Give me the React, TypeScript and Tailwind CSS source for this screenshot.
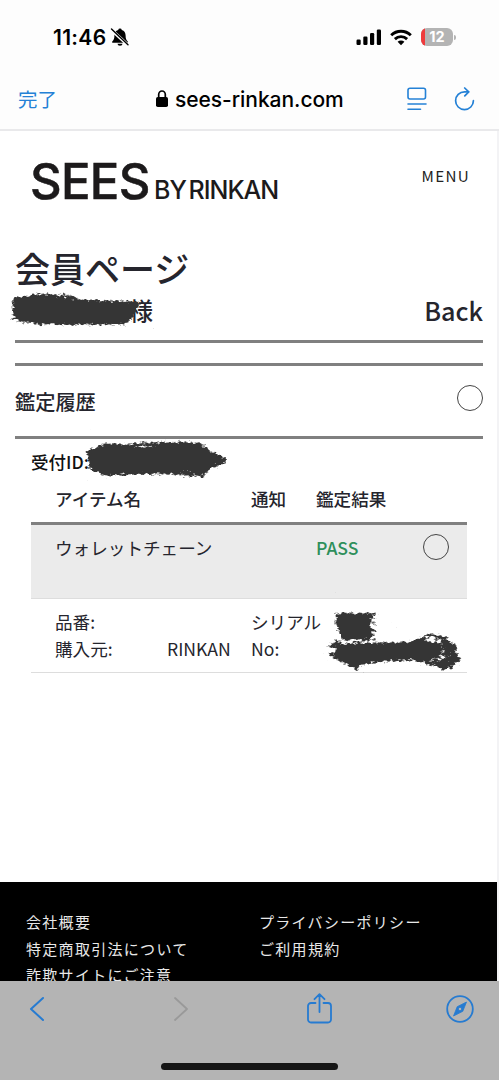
import { ReactNode } from 'react';

const footerLinks = [
  ['会社概要', 'プライバシーポリシー'],
  ['特定商取引法について', 'ご利用規約'],
  ['詐欺サイトにご注意', ''],
];

// charcoal marker: the blurred stroke is thresholded against noise, so only the rim turns grainy
const Scribble = ({ className, seed, children, viewBox }: { className: string; seed: number; viewBox: string; children: ReactNode }) => (
  <svg className={`absolute overflow-visible pointer-events-none ${className}`} viewBox={viewBox} fill="none" stroke="#363636" strokeLinecap="round" strokeLinejoin="round">
    <defs>
      <filter id={`rough-${seed}`} x="-20%" y="-40%" width="140%" height="180%">
        <feGaussianBlur in="SourceAlpha" stdDeviation="2.2" result="soft" />
        <feTurbulence type="fractalNoise" baseFrequency="0.25 0.42" numOctaves="3" seed={seed} result="noise" />
        <feComposite in="soft" in2="noise" operator="arithmetic" k1="0" k2="4.2" k3="4" k4="-3.5" result="grain" />
        <feFlood floodColor="#363636" />
        <feComposite in2="grain" operator="in" />
      </filter>
    </defs>
    <g filter={`url(#rough-${seed})`}>{children}</g>
  </svg>
);

const StatusBar = () => (
  <div className="flex h-[74px] shrink-0 items-center pl-[53px] pr-[43px] text-black">
    <span className="text-[21px] font-semibold leading-none tracking-[0.3px]">11:46</span>
    <svg className="ml-[4px] h-[20px] w-[20px]" viewBox="0 0 20 20">
      <path d="M10 1.5a1.8 1.8 0 0 1 1.8 1.4c2.6.8 3.8 2.9 3.8 5.5 0 3.6.8 4.6 2.2 6v1.3H2.2v-1.3c1.4-1.4 2.2-2.4 2.2-6 0-2.6 1.2-4.7 3.8-5.5A1.8 1.8 0 0 1 10 1.5Z" fill="#000" />
      <path d="M7.5 16.7h5a2.5 2.1 0 0 1-5 0Z" fill="#000" />
      <path d="M1 2.4 18 18.2" stroke="#fdfdfd" strokeWidth="3.2" />
      <path d="M1.5 2 18 17.7" stroke="#000" strokeWidth="1.4" strokeLinecap="round" />
    </svg>
    <svg className="ml-auto h-[17px] w-[26px]" viewBox="0 0 26 17">
      <rect x="0.5" y="10.5" width="4.2" height="5.5" rx="1.2" />
      <rect x="7.3" y="7.5" width="4.2" height="8.5" rx="1.2" />
      <rect x="14" y="4" width="4.2" height="12" rx="1.2" />
      <rect x="20.8" y="0.5" width="4.2" height="15.5" rx="1.2" />
    </svg>
    <svg className="ml-[8px] h-[17px] w-[22px]" viewBox="0 0 22 17" fill="none" stroke="#000" strokeWidth="2.9">
      <path d="M1.2 6.3a14 14 0 0 1 19.6 0" />
      <path d="M4.9 10.1a8.8 8.8 0 0 1 12.2 0" />
      <path d="M11 16.2 7.6 12.8a4.9 4.9 0 0 1 6.8 0Z" fill="#000" stroke="none" />
    </svg>
    <div className="relative ml-[9px] flex h-[18px] w-[32px] items-center justify-center overflow-hidden rounded-[6px] bg-[#b4b4b4]">
      <div className="absolute left-0 top-0 h-full w-[4px] bg-[#ee3b3d]" />
      <span className="text-[14.5px] font-bold leading-none text-white">12</span>
    </div>
    <div className="ml-px h-[5px] w-[2px] rounded-r-full bg-[#b4b4b4]" />
  </div>
);

const BrowserBar = () => (
  <div className="flex h-[57px] shrink-0 items-center border-b-2 border-[#e9e9eb] pb-[5px] pl-[18px] pr-[24px]">
    <span className="w-[138px] font-['Noto_Sans_CJK_JP',sans-serif] text-[19.5px] leading-none text-[#2481d6]">完了</span>
    <svg className="h-[18px] w-[12px]" viewBox="0 0 12 18">
      <rect y="7" width="12" height="10" rx="1.8" />
      <path d="M2.7 8V4.5a3.3 3.5 0 0 1 6.6 0V8" fill="none" stroke="#000" strokeWidth="1.7" />
    </svg>
    <span className="ml-[7px] text-[21px] font-medium leading-none tracking-[-0.05px] text-black">sees-rinkan.com</span>
    <svg className="ml-auto h-[24px] w-[20px]" viewBox="0 0 20 24" fill="none" stroke="#2481d6" strokeWidth="1.6" strokeLinecap="round">
      <rect x="1" y="1.2" width="17.5" height="10.8" rx="2" />
      <path d="M1 17h18M1 22.3h12.5" />
    </svg>
    <svg className="ml-[27px] h-[24px] w-[21px]" viewBox="0 0 21 24" fill="none" stroke="#2481d6" strokeWidth="1.7" strokeLinecap="round" strokeLinejoin="round">
      <path d="M14.5 4.8H10.5A8.9 8.9 0 1 0 19.4 13.7" />
      <path d="M10.7 1 14.7 4.9 10.8 8.9" />
    </svg>
  </div>
);

const SiteHeader = () => (
  <header className="flex h-[111px] items-start pl-[30px] pr-[27px] pt-[27px]">
    <div className="flex items-baseline whitespace-nowrap text-[#1c1a1b]">
      <span className="w-[124px] text-[49px] font-medium leading-[48px] tracking-[-0.7px] [-webkit-text-stroke:0.5px]">SEES</span>
      <span className="text-[25px] font-medium leading-none tracking-[-1px] [word-spacing:-3px]">BY RINKAN</span>
    </div>
    <span className="ml-auto mt-[8px] font-['Noto_Sans_CJK_JP',sans-serif] text-[15.2px] leading-[18px] tracking-[1.3px] text-[#222]">MENU</span>
  </header>
);

const Circle = () => <span className="box-border h-[26px] w-[26px] rounded-full border-[1.5px] border-[#444]" />;

const MemberPage = () => (
  <main className="flex h-[640px] flex-col pl-[15px] pr-[14px] font-['Noto_Sans_CJK_JP',sans-serif] text-[#25252d]">
    <h1 className="h-[52px] text-[35px] font-medium leading-[52px]">会員ページ</h1>
    <div className="relative flex h-[49px] items-start border-b-[3px] border-[#808080] text-[24px] font-medium leading-[32px]">
      <span className="pl-[114px]">様</span>
      <span className="ml-auto text-[25.2px] leading-[32px]">Back</span>
      <Scribble className="left-[-8px] top-[-4px] h-[40px] w-[138px]" viewBox="0 0 138 40" seed={3}>
        <path d="M9 8 67 11 130 14 125 26 118 32 15 31 9 26Z" fill="#363636" strokeWidth="3" />
        <path d="M5 11 34 5 68 7M5 20 20 14M5 29 17 23M100 13h33M30 33h86" strokeWidth="3" />
      </Scribble>
    </div>
    <div className="h-[20px] shrink-0" />
    <section className="flex h-[76px] items-center border-y-[3px] border-[#808080] text-[20.2px] font-medium">
      <span className="mt-[2px]">鑑定履歴</span>
      <span className="ml-auto mt-[-6px] flex"><Circle /></span>
    </section>
    <section className="pl-[16px] pr-[16px] text-[17.6px]">
      <div className="relative h-[43px] text-[17.5px] font-medium leading-[46px] text-[#111]">
        受付ID:
        <Scribble className="left-[50px] top-0 h-[42px] w-[150px]" viewBox="0 0 150 42" seed={8}>
          <path d="M8 12 29 8 63 10 83 7 123 8 138 21 125 33 94 31 24 33 11 28Z" fill="#363636" strokeWidth="2" />
          <path d="M6 14 23 6 39 7 78 4 121 5M6 20h135M7 28 25 35 78 33 124 37M120 12l22 6 3 3-9 6" strokeWidth="2.8" />
        </Scribble>
      </div>
      <div className="grid h-[43px] grid-cols-[196px_65px_1fr] border-b-[3px] border-[#808080] pl-[24px] font-medium leading-[33px]">
        <span>アイテム名</span>
        <span>通知</span>
        <span>鑑定結果</span>
      </div>
      <div className="grid h-[74px] grid-cols-[261px_107px_1fr] border-b border-[#ddd] bg-[#ebebeb] pl-[24px] leading-[46px]">
        <span>ウォレットチェーン</span>
        <span className="font-medium text-[#2e8f5b]">PASS</span>
        <span className="mt-[9px] flex"><Circle /></span>
      </div>
      <div className="relative grid h-[74px] grid-cols-[112px_84px_1fr] border-b border-[#ddd] pl-[24px] pt-[9px] leading-[27px]">
        <span>品番:<br />購入元:</span>
        <span className="pt-[27px]">RINKAN</span>
        <span>シリアル<br />No:</span>
        <Scribble className="left-[291px] top-[9px] h-[68px] w-[144px]" viewBox="0 0 144 68" seed={14}>
          <path d="M17 6H49L46 17 49 29H20L16 17Z" fill="#363636" strokeWidth="1.5" />
          <path d="M13 7h42M12 15h42M17 23h37M20 30h32" strokeWidth="2.8" />
          <path d="M16 38 34 37 102 35 117 37 115 49 58 52 32 56 14 49Z" fill="#363636" strokeWidth="3" />
          <path d="M7 39 17 33M6 46 20 52 37 61M90 35 110 27 124 31M110 37l24 1-14 7 17 5-22 4 16 4-24-3-13-4M119 30l13 9 2 14-14 8M103 53l20 6" strokeWidth="3.4" />
        </Scribble>
      </div>
    </section>
  </main>
);

const Toolbar = () => (
  <nav className="flex h-[99px] shrink-0 flex-col items-center bg-[#b4b4b4]">
    <div className="flex h-[55px] w-full items-center pl-[29px] pr-[25px] text-[#267bd1]">
      <svg className="h-[26px] w-[16px]" viewBox="0 0 16 26" fill="none" stroke="currentColor" strokeWidth="2" strokeLinecap="round" strokeLinejoin="round"><path d="M14 2 2 13 14 24" /></svg>
      <svg className="ml-[128px] h-[26px] w-[16px] text-[#999]" viewBox="0 0 16 26" fill="none" stroke="currentColor" strokeWidth="1.8" strokeLinecap="round" strokeLinejoin="round"><path d="M2 2 14 13 2 24" /></svg>
      <svg className="ml-[117px] h-[32px] w-[28px]" viewBox="0 0 28 32" fill="none" stroke="currentColor" strokeWidth="1.8" strokeLinecap="round" strokeLinejoin="round">
        <path d="M9.5 10H5a3 3 0 0 0-3 3v13.500a3 3 0 0 0 3 3h17a3 3 0 0 0 3-3V13a3 3 0 0 0-3-3h-4.500M13.500 19V1.500M8.500 6.200l5-5 5 5" />
      </svg>
      <svg className="ml-auto h-[28px] w-[28px]" viewBox="0 0 28 28" fill="none" stroke="currentColor" strokeWidth="1.8">
        <circle cx="14" cy="14" r="12.8" />
        <path fillRule="evenodd" d="M20.5 7 16.8 16.3 7.5 21 11.2 11.7ZM14 12.3a1.7 1.7 0 1 0 0 3.4 1.7 1.7 0 0 0 0-3.4Z" fill="currentColor" strokeWidth="0.8" strokeLinejoin="round" />
      </svg>
    </div>
    <div className="mt-[27px] h-[7px] w-[177px] rounded-full bg-[#161616]" />
  </nav>
);

export default function App() {
  return (
    <div className="flex h-[1080px] w-[499px] flex-col overflow-hidden bg-[#fdfdfd] font-[Inter,sans-serif]">
      <StatusBar />
      <BrowserBar />
      <div className="h-[850px] shrink-0 overflow-hidden border-r-2 border-[#f3f3f5] bg-white">
        <SiteHeader />
        <MemberPage />
        <footer className="h-[99px] overflow-hidden bg-black pl-[26px] pt-[27px] font-['Noto_Sans_CJK_JP',sans-serif] text-[15px] leading-[26.5px] tracking-[1.3px] text-[#e8e8e8]">
          {footerLinks.map(([left, right]) => (
            <div key={left} className="grid grid-cols-[233px_1fr]">
              <span>{left}</span>
              <span>{right}</span>
            </div>
          ))}
        </footer>
      </div>
      <Toolbar />
    </div>
  );
}
